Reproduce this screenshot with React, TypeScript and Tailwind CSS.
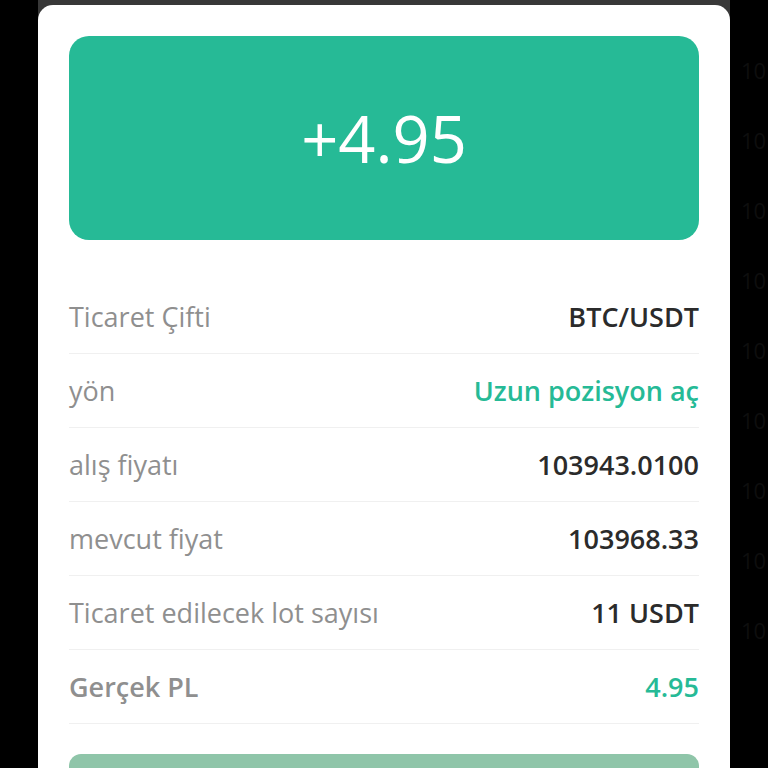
import React from "react";

const rows: { label: string; value: string; valueClass: string; labelClass?: string }[] = [
  { label: "Ticaret Çifti", value: "BTC/USDT", valueClass: "text-[#2b2b2b] font-semibold" },
  { label: "yön", value: "Uzun pozisyon aç", valueClass: "text-[#26ba96] font-semibold" },
  { label: "alış fiyatı", value: "103943.0100", valueClass: "text-[#2b2b2b] font-semibold" },
  { label: "mevcut fiyat", value: "103968.33", valueClass: "text-[#2b2b2b] font-semibold" },
  { label: "Ticaret edilecek lot sayısı", value: "11 USDT", valueClass: "text-[#2b2b2b] font-semibold" },
  { label: "Gerçek PL", value: "4.95", valueClass: "text-[#26ba96] font-semibold", labelClass: "font-semibold" },
];

const bgTicks = ["10", "10", "10", "10", "10", "10", "10", "10", "10"];

export default function App() {
  return (
    <div
      className="relative flex h-[768px] w-[768px] overflow-hidden bg-black"
      style={{ fontFamily: '"Open Sans", "Noto Sans", sans-serif' }}
    >
      {/* faint chart axis behind the dimming overlay */}
      <div className="absolute left-[741px] top-[58px] flex flex-col gap-[46px] text-[22px] leading-[24px] text-[#0e0e0e]">
        {bgTicks.map((t, i) => (
          <span key={i}>{t}</span>
        ))}
      </div>

      <div className="relative mx-[38px] flex-1 bg-[linear-gradient(to_bottom,#383838_20px,transparent_20px)]">
        <div className="mt-[5px] rounded-t-[15px] bg-white px-[31px] pt-[31px] pb-[40px]">
          <div className="flex h-[204px] items-center justify-center rounded-[20px] bg-[#26ba96]">
            <span className="text-[65px] leading-none text-white">+4.95</span>
          </div>

          <div className="mt-[40px] flex flex-col">
            {rows.map((r) => (
              <div
                key={r.label}
                className="flex h-[74px] items-center justify-between border-b-[1.5px] border-[#f0f0f0] pt-[1px]"
              >
                <span className={`text-[27px] text-[#8f8f8f] ${r.labelClass ?? ""}`}>{r.label}</span>
                <span className={`text-[27px] ${r.valueClass}`}>{r.value}</span>
              </div>
            ))}
          </div>

          <div className="mt-[30px] h-[60px] rounded-[12px] bg-[#8fc5a9]" />
        </div>
      </div>
    </div>
  );
}
